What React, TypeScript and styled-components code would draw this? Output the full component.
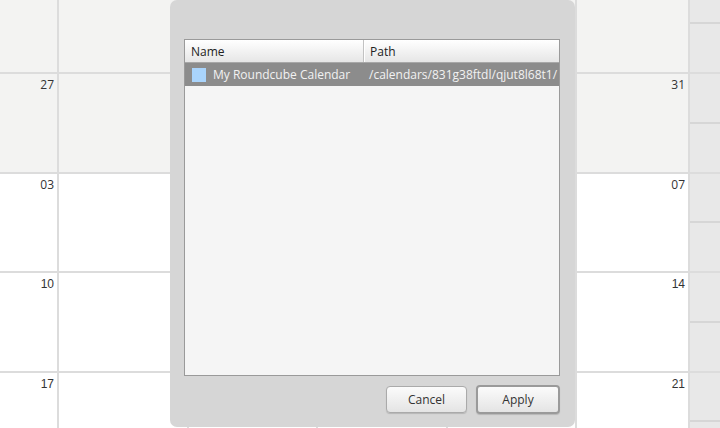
import React from "react";
import styled, { createGlobalStyle } from "styled-components";

const Global = createGlobalStyle`
  html, body { margin: 0; padding: 0; width: 720px; height: 428px; overflow: hidden; background: #fff; }
  #root { width: 720px; height: 428px; position: relative; overflow: hidden; }
`;

const Stage = styled.div`
  position: relative;
  width: 720px;
  height: 428px;
  overflow: hidden;
`;

const Calendar = styled.div`
  display: grid;
  grid-template-columns: 57px 1fr 1fr 1fr 1fr 111px 30px;
  grid-template-rows: 72px repeat(4, 97.5px);
  gap: 2px;
  background: #dcdcdc;
  width: 720px;
  height: 480px;
`;

const Cell = styled.div<{ $past?: boolean }>`
  background: ${(p) => (p.$past ? "#f3f3f2" : "#ffffff")};
  display: flex;
  justify-content: flex-end;
  align-items: flex-start;
  padding: 3px 3px 0 0;
  box-sizing: border-box;
`;

const DayNum = styled.span<{ $arial?: boolean }>`
  font-family: ${(p) => (p.$arial ? '"Liberation Sans", Arial, sans-serif' : '"Open Sans", sans-serif')};
  font-size: 12px;
  line-height: 16px;
  color: #333;
`;

const SlotCol = styled.div`
  display: flex;
  flex-direction: column;
  justify-content: flex-end;
  gap: 2px;
  background: #d6d6d6;
  overflow: hidden;
`;

const Slot = styled.div`
  flex: 0 0 48px;
  background: #e8e8e8;
`;

const Dialog = styled.div`
  position: absolute;
  left: 170px;
  top: 0;
  width: 405px;
  height: 427px;
  background: #d6d6d6;
  border-radius: 7px;
  padding: 39px 15px 0 14px;
  box-sizing: border-box;
  display: flex;
  flex-direction: column;
`;

const Table = styled.div`
  box-sizing: border-box;
  height: 337px;
  border: 1px solid #9a9a9a;
  background: #f5f5f5;
  display: flex;
  flex-direction: column;
  font-family: "Open Sans", sans-serif;
  font-size: 12px;
`;

const HeadRow = styled.div`
  display: grid;
  grid-template-columns: 179px 1fr;
  height: 22px;
  background: linear-gradient(#ffffff, #e6e6e6);
  border-bottom: 1px solid #a8a8a8;
`;

const HeadCell = styled.div<{ $first?: boolean }>`
  display: flex;
  align-items: center;
  padding-left: 6px;
  color: #222;
  border-right: ${(p) => (p.$first ? "1px solid #c2c2c2" : "none")};
  box-shadow: ${(p) => (p.$first ? "1px 0 0 #ffffff" : "none")};
`;

const DataRow = styled.div`
  display: grid;
  grid-template-columns: 180px 1fr;
  height: 23px;
  background: #8c8c8c;
  color: #f2f2f2;
`;

const DataCell = styled.div<{ $first?: boolean }>`
  display: flex;
  align-items: center;
  gap: 7px;
  padding-left: ${(p) => (p.$first ? "7px" : "4px")};
  white-space: nowrap;
  overflow: hidden;
`;

const Swatch = styled.span`
  width: 14px;
  height: 14px;
  background: #a9d4fc;
  flex: 0 0 14px;
`;

const Buttons = styled.div`
  display: flex;
  justify-content: flex-end;
  align-items: flex-start;
  gap: 9px;
  margin-top: 9px;
`;

const Button = styled.button<{ $primary?: boolean }>`
  font-family: "Open Sans", sans-serif;
  font-size: 12px;
  color: #333;
  width: ${(p) => (p.$primary ? "84px" : "81px")};
  height: ${(p) => (p.$primary ? "29px" : "27px")};
  border: ${(p) => (p.$primary ? "2px solid #9a9a9a" : "1px solid #aaaaaa")};
  border-radius: 4px;
  background: linear-gradient(#fbfbfb, #e4e4e4);
  box-shadow: 0 1px 1px rgba(0, 0, 0, 0.15);
  padding: 0;
  margin-top: ${(p) => (p.$primary ? "0" : "1px")};
`;

const rows = [
  { past: true, left: "", right: "" },
  { past: true, left: "27", right: "31" },
  { past: false, left: "03", right: "07" },
  { past: false, left: "10", right: "14", arial: true },
  { past: false, left: "17", right: "21", arial: true },
];

export default function App() {
  return (
    <Stage>
      <Global />
      <Calendar>
        {rows.map((r, i) => (
          <React.Fragment key={i}>
            <Cell $past={r.past}>
              {r.left && <DayNum $arial={r.arial}>{r.left}</DayNum>}
            </Cell>
            <Cell $past={r.past} />
            <Cell $past={r.past} />
            <Cell $past={r.past} />
            <Cell $past={r.past} />
            <Cell $past={r.past}>
              {r.right && <DayNum $arial={r.arial}>{r.right}</DayNum>}
            </Cell>
            <SlotCol>
              <Slot />
              <Slot />
            </SlotCol>
          </React.Fragment>
        ))}
      </Calendar>
      <Dialog>
        <Table>
          <HeadRow>
            <HeadCell $first>Name</HeadCell>
            <HeadCell>Path</HeadCell>
          </HeadRow>
          <DataRow>
            <DataCell $first>
              <Swatch />
              My Roundcube Calendar
            </DataCell>
            <DataCell>/calendars/831g38ftdl/qjut8l68t1/</DataCell>
          </DataRow>
        </Table>
        <Buttons>
          <Button>Cancel</Button>
          <Button $primary>Apply</Button>
        </Buttons>
      </Dialog>
    </Stage>
  );
}
